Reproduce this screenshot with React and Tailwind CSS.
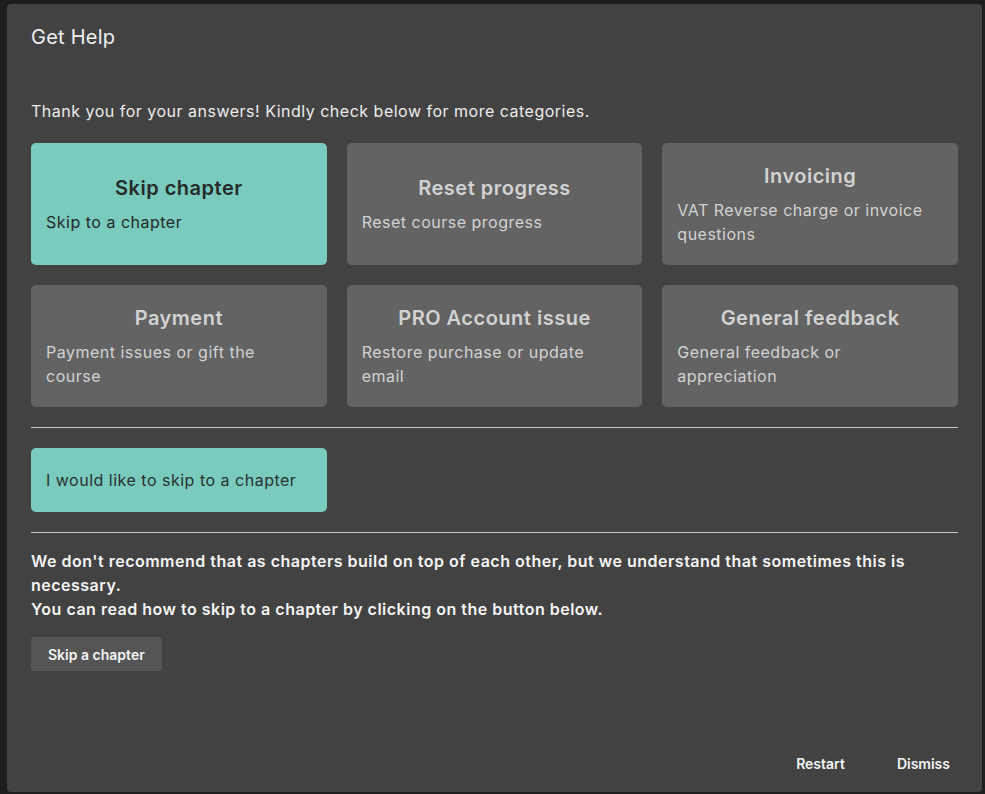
import React from 'react';

const categories = [
  { title: 'Skip chapter', desc: 'Skip to a chapter', active: true },
  { title: 'Reset progress', desc: 'Reset course progress' },
  { title: 'Invoicing', desc: 'VAT Reverse charge or invoice questions' },
  { title: 'Payment', desc: 'Payment issues or gift the course' },
  { title: 'PRO Account issue', desc: 'Restore purchase or update email' },
  { title: 'General feedback', desc: 'General feedback or appreciation' },
];

const CategoryCard = ({ title, desc, active }) => (
  <div
    className={`h-[122px] rounded-[5px] px-[15px] flex flex-col justify-center ${
      active ? 'bg-[#78cbbd] text-[#262a29]' : 'bg-[#636363] text-[#d2d2d2]'
    }`}
  >
    <div className="text-center text-[20px] leading-[28px] font-semibold tracking-[0.5px]">{title}</div>
    <div className="mt-[8px] text-[16px] leading-[24px] tracking-[0.5px]">{desc}</div>
  </div>
);

const App = () => {
  return (
    <div
      className="min-h-screen bg-[#1e1e1e] pl-[7px] pr-[3px] pt-[4px] pb-[2px]"
      style={{ fontFamily: 'Inter, "Noto Sans", sans-serif' }}
    >
      <div className="h-[788px] bg-[#424242] rounded-[4px] px-6 flex flex-col">
        <h1 className="pt-[19px] text-[20px] leading-[28px] tracking-[0.25px] text-[#f0f0f0]">Get Help</h1>

        <p className="mt-[48px] text-[16px] leading-[24px] text-[#ececec] tracking-[0.5px]">
          Thank you for your answers! Kindly check below for more categories.
        </p>

        <div className="mt-[20px] grid grid-cols-3 gap-5">
          {categories.map((c) => (
            <CategoryCard key={c.title} {...c} />
          ))}
        </div>

        <div className="mt-[20px] h-px bg-[#c8c8c8]" />

        <div className="mt-[20px] grid grid-cols-3 gap-5">
          <div className="h-[64px] rounded-[5px] bg-[#78cbbd] px-[15px] flex items-center text-[16px] text-[#2c302f] tracking-[0.5px]">
            I would like to skip to a chapter
          </div>
        </div>

        <div className="mt-[20px] h-px bg-[#c8c8c8]" />

        <div className="mt-[16px] text-[16px] leading-[24px] font-semibold text-[#f4f4f4] tracking-[0.5px]">
          <p>
            We don't recommend that as chapters build on top of each other, but we understand that sometimes this is
            necessary.
          </p>
          <p>You can read how to skip to a chapter by clicking on the button below.</p>
        </div>

        <div className="mt-[16px]">
          <button className="h-[34px] px-[17px] rounded-[3px] bg-[#555555] text-[14px] font-semibold text-[#f4f4f4]">
            Skip a chapter
          </button>
        </div>

        <div className="mt-auto pb-[18px] flex justify-end gap-[52px] pr-[8px]">
          <button className="text-[14px] font-semibold text-[#f4f4f4]">Restart</button>
          <button className="text-[14px] font-semibold text-[#f4f4f4]">Dismiss</button>
        </div>
      </div>
    </div>
  );
};

export default App;
